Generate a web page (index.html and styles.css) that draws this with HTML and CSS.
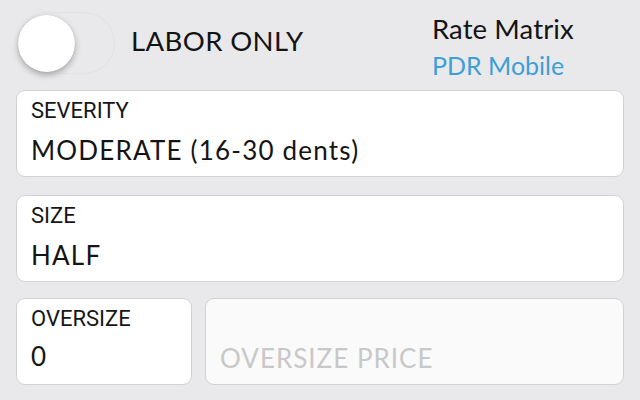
FILE: index.html
```html
<!DOCTYPE html>
<html>
<head>
<meta charset="utf-8">
<link rel="stylesheet" href="styles.css">
</head>
<body>
<div class="page">
  <header class="top">
    <div class="labor">
      <div class="switch"><div class="knob"></div></div>
      <span class="labor-text">LABOR ONLY</span>
    </div>
    <div class="matrix">
      <div class="matrix-title">Rate Matrix</div>
      <div class="matrix-sub">PDR Mobile</div>
    </div>
  </header>
  <div class="card severity">
    <div class="label">SEVERITY</div>
    <div class="value">MODERATE (16-30 dents)</div>
  </div>
  <div class="card size">
    <div class="label">SIZE</div>
    <div class="value">HALF</div>
  </div>
  <div class="row">
    <div class="card small">
      <div class="label">OVERSIZE</div>
      <div class="value">0</div>
    </div>
    <div class="card price">
      <div class="placeholder">OVERSIZE PRICE</div>
    </div>
  </div>
</div>
</body>
</html>
```
FILE: styles.css
```css
* { box-sizing: border-box; }
html, body { margin: 0; padding: 0; }
body {
  width: 640px;
  height: 400px;
  overflow: hidden;
  background: #e9e9eb;
  font-family: "Lato", "Noto Sans", sans-serif;
  color: #141414;
}
.page {
  padding: 0 16px;
  display: flex;
  flex-direction: column;
}
.top {
  height: 90px;
  display: flex;
  justify-content: space-between;
  align-items: flex-start;
}
.labor {
  display: flex;
  align-items: flex-start;
  margin-top: 12px;
  margin-left: 2px;
}
.switch {
  width: 97px;
  height: 62px;
  border-radius: 31px;
  border: 1px solid #e2e2e4;
  position: relative;
}
.knob {
  position: absolute;
  left: -1px;
  top: 2px;
  width: 57px;
  height: 57px;
  border-radius: 50%;
  background: #fff;
  box-shadow: 0 3px 6px rgba(0,0,0,0.28), 0 0 1px rgba(0,0,0,0.2);
}
.labor-text {
  margin-left: 16px;
  margin-top: 13px;
  font-size: 27.5px;
  line-height: 32px;
  letter-spacing: 0.4px;
}
.matrix {
  width: 150px;
  margin-right: 42px;
  margin-top: 13px;
}
.matrix-title {
  font-size: 27.5px;
  line-height: 32px;
  letter-spacing: 0.1px;
}
.matrix-sub {
  margin-top: 5px;
  font-size: 25px;
  line-height: 30px;
  color: #3d9fd6;
}
.card {
  background: #fff;
  border: 1px solid #d2d2d4;
  border-radius: 9px;
  height: 87px;
  padding: 7px 14px 0;
}
.severity { margin-bottom: 18px; }
.size { margin-bottom: 16px; }
.label {
  font-family: "Roboto", "Liberation Sans", sans-serif;
  font-size: 22px;
  line-height: 26px;
  color: #161616;
}
.value {
  font-size: 26px;
  line-height: 32px;
  letter-spacing: 1.2px;
  margin-top: 10px;
}
.row {
  display: flex;
  gap: 13px;
}
.small { width: 176px; flex: none; }
.small .value { margin-top: 8px; }
.price {
  flex: 1;
  background: #fafafa;
}
.placeholder {
  font-size: 26px;
  line-height: 32px;
  letter-spacing: 1px;
  color: #c8c8c8;
  margin-top: 36px;
}
```
